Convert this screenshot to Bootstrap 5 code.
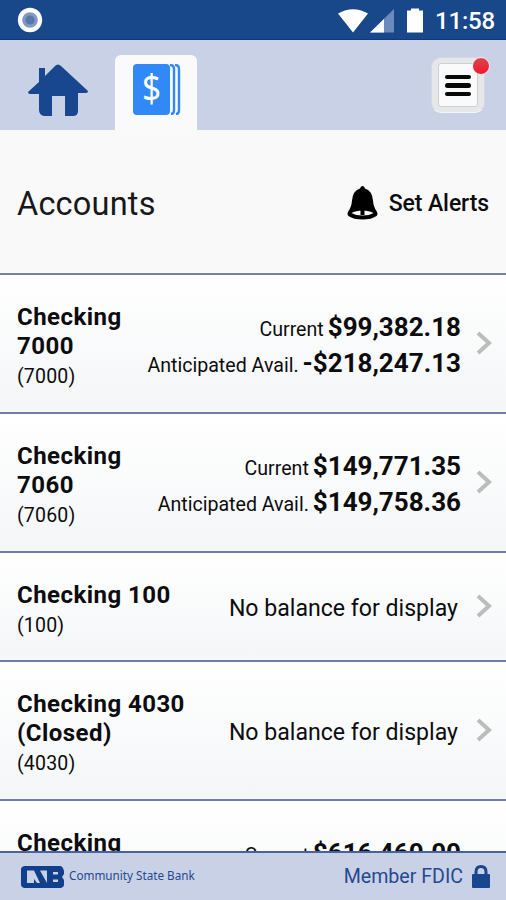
<!DOCTYPE html>
<html lang="en">
<head>
<meta charset="utf-8">
<meta name="viewport" content="width=device-width, initial-scale=1">
<title>Accounts</title>
<link href="https://cdn.jsdelivr.net/npm/bootstrap@5.3.0/dist/css/bootstrap.min.css" rel="stylesheet">
<style>
body{font-family:Roboto,"Liberation Sans",sans-serif;color:#0c0c0e;background:#f9f9fa;height:900px}
svg{display:block;flex:none}
.statusbar{height:40px;background:#18478a;padding:0 13px 0 17px;border-bottom:1px solid #123a79}
.clock{font-size:24px;font-weight:500;line-height:38px;letter-spacing:-.2px;width:58px;margin-left:10px;padding-top:2px}
.topnav{height:90px;background:#c9d1e6;padding:0 21px 0 27px}
.tab{width:82px;height:75px;background:#fafafb;border-radius:6px 6px 0 0;margin-left:26px;padding:9px 0 0 18px}
.menu-btn{width:54px;height:56px;margin-top:17px;border-radius:10px;background:#e6e7e8;border:1px solid #d5d8e0;border-bottom-color:#f4f4f4;padding:5px 6px}
.menu-face{width:100%;height:100%;background:#fafafa;border:1px solid #cfcfcf;border-radius:3px;padding:10.5px 6px 0}
.menu-face span{display:block;height:4.6px;border-radius:3px;background:#080808;margin-bottom:4.1px}
.dot{top:-1px;right:-6px;width:18px;height:18px;background:linear-gradient(#d94450,#f0182c);border:1.5px solid #fbe9ee}
.page-head{height:145px;padding:4px 17px 0;border-bottom:2px solid #7680ad;background:#f9f9f9}
.page-title{font-size:32.5px;font-weight:400;letter-spacing:.2px;line-height:1.2;padding-top:2px!important;color:#18181a}
.alerts{font-size:23px;font-weight:500;letter-spacing:-.1px;gap:11px}
.alerts span{padding-top:2px}
.alerts svg{margin-top:-1px}
.account{height:139px;padding:28px 14px 0 17px;border-bottom:2px solid #717cac;background:linear-gradient(#fff,#f4f6f7)}
.account.short{height:109px}
.acct-name{font-size:24px;font-weight:700;line-height:29px;letter-spacing:.45px}
.acct-no{font-size:19.5px;line-height:29px;letter-spacing:.2px;padding-top:1px}
.wrap-name{width:120px}
.lbl{font-size:19.6px;line-height:1}
.amt{font-size:26px;font-weight:700;line-height:1}
.bal{line-height:36px;padding-top:9.5px}
.none{font-size:23.1px;padding:14px 3px 0 0;line-height:28px}
.tall .none{padding-top:29px}
.chev{margin:27px 0 0 15px}
.short .chev{margin-top:12px}
.foot{height:49px;background:#c9d1e6;border-top:2px solid #4862a0;color:#25498f;padding:0 16px 0 21px}
.bank{font-family:"Noto Sans","Open Sans",sans-serif;font-size:11.7px;margin-left:5px;padding-bottom:2px}
.fdic{font-size:19.6px;gap:9px}
</style>
<script src="https://cdn.jsdelivr.net/npm/bootstrap@5.3.0/dist/js/bootstrap.bundle.min.js"></script>
</head>
<body class="d-flex flex-column overflow-hidden">
<div class="statusbar d-flex align-items-center flex-shrink-0 text-white">
  <svg width="26" height="26" viewBox="0 0 26 26"><circle cx="13" cy="13" r="12.2" fill="#fff"/><circle cx="13" cy="13" r="7.8" fill="#8299bf"/><circle cx="13" cy="13" r="4.500" fill="#5977aa"/></svg>
  <svg class="ms-auto" width="88" height="28" viewBox="0 0 88 28"><path fill="#fff" d="M1 7.500Q16-1 31 7.500L16 26.500Z"/><path fill="#6d8abd" d="M57 3V26.500H33Z"/><path fill="#fff" d="M47 13V26.500H33Z"/><path fill="#fff" d="M70 4.500h4V2.500h8v2h4v22H70Z"/></svg>
  <div class="clock">11:58</div>
</div>
<nav class="topnav d-flex flex-shrink-0">
  <svg class="mt-4" width="62" height="54" viewBox="0 0 62 54"><path fill="#18478f" d="M1 28 12 18V4h6v8L28 2q3-3 6 0L61 27q0 2-2 2h-8v18q0 5-5 5h-8V32H25v20h-8q-5-1-5-6V30H3q-2 0-2-2Z"/></svg>
  <div class="tab align-self-end">
    <svg width="49" height="51" viewBox="0 0 49 51"><rect width="37" height="51" rx="4" fill="#3089f5"/><g fill="none" stroke="#3089f5" stroke-width="2.400"><path d="M37 1q4 0 4 4v41q0 4-3 4"/><path d="M42 1q4 0 4 4v41q0 4-3 4"/></g><text transform="translate(18.500 38) scale(.98 1.130)" text-anchor="middle" font-family="Noto Sans, sans-serif" font-size="34" fill="#fff">$</text></svg>
  </div>
  <div class="menu-btn ms-auto position-relative">
    <div class="menu-face"><span></span><span></span><span></span></div>
    <div class="dot position-absolute rounded-circle"></div>
  </div>
</nav>
<header class="page-head d-flex align-items-center justify-content-between flex-shrink-0">
  <h1 class="page-title m-0">Accounts</h1>
  <div class="alerts d-flex align-items-center">
    <svg width="31" height="34" viewBox="0 0 31 34"><path d="M15.500 0q2 0 2.500 2.500 7 2 8 12Q26.500 21 29.500 25q2 3 0 5-5 3.500-14 3.500T1.500 30q-2-2 0-5Q4.500 21 5 14.500 6 4.500 13 2.500q.5-2.500 2.500-2.500Z"/><path fill="#f9f9f9" d="M4.500 27q4-2.500 11-2.500T26.500 27q-4 2.500-11 2.500T4.500 27Z"/><path d="M13.500 24h4v5h-4z"/></svg>
    <span>Set Alerts</span>
  </div>
</header>
<main class="flex-grow-1 overflow-hidden">
  <div class="account d-flex">
    <div class="wrap-name"><div class="acct-name">Checking 7000</div><div class="acct-no">(7000)</div></div>
    <div class="bal ms-auto text-end"><div><span class="lbl">Current</span> <span class="amt">$99,382.18</span></div><div><span class="lbl">Anticipated Avail.</span> <span class="amt">-$218,247.13</span></div></div>
    <svg class="chev" width="16" height="26" viewBox="0 0 16 26"><path d="m2 3 11 10L2 23" fill="none" stroke="#bcbcbc" stroke-width="4"/></svg>
  </div>
  <div class="account d-flex">
    <div class="wrap-name"><div class="acct-name">Checking 7060</div><div class="acct-no">(7060)</div></div>
    <div class="bal ms-auto text-end"><div><span class="lbl">Current</span> <span class="amt">$149,771.35</span></div><div><span class="lbl">Anticipated Avail.</span> <span class="amt">$149,758.36</span></div></div>
    <svg class="chev" width="16" height="26" viewBox="0 0 16 26"><path d="m2 3 11 10L2 23" fill="none" stroke="#bcbcbc" stroke-width="4"/></svg>
  </div>
  <div class="account short d-flex">
    <div><div class="acct-name">Checking 100</div><div class="acct-no">(100)</div></div>
    <div class="none ms-auto">No balance for display</div>
    <svg class="chev" width="16" height="26" viewBox="0 0 16 26"><path d="m2 3 11 10L2 23" fill="none" stroke="#bcbcbc" stroke-width="4"/></svg>
  </div>
  <div class="account tall d-flex">
    <div><div class="acct-name">Checking 4030<br>(Closed)</div><div class="acct-no">(4030)</div></div>
    <div class="none ms-auto">No balance for display</div>
    <svg class="chev" width="16" height="26" viewBox="0 0 16 26"><path d="m2 3 11 10L2 23" fill="none" stroke="#bcbcbc" stroke-width="4"/></svg>
  </div>
  <div class="account d-flex">
    <div class="wrap-name"><div class="acct-name">Checking</div></div>
    <div class="bal ms-auto text-end"><span class="lbl">Current</span> <span class="amt">$616,460.00</span></div>
    <svg class="chev" width="16" height="26"></svg>
  </div>
</main>
<footer class="foot d-flex align-items-center flex-shrink-0">
  <svg width="43" height="22" viewBox="0 0 43 22"><path fill="#123f8c" d="M3 0H40q3 2 3 5v3l-2 3 2 3v5q0 2-3 3H3q-3-1-3-3V3q0-2 3-3Z"/><g fill="#c9d1e6"><path d="M6 4.500h7l6 12.500h-3l-3-4v4H6ZM19 4.500h7V17ZM32 6h5v2.500h-5zM32 13.500h5V16h-5z"/></g></svg>
  <span class="bank">Community State Bank</span>
  <div class="fdic ms-auto d-flex align-items-center"><span>Member FDIC</span>
  <svg width="18" height="23" viewBox="0 0 18 23"><path fill="none" stroke="#18478f" stroke-width="3" d="M4 10V7q0-5.500 5-5.500T14 7v3"/><rect y="9" width="18" height="14" rx="1" fill="#18478f"/></svg></div>
</footer>
</body>
</html>
